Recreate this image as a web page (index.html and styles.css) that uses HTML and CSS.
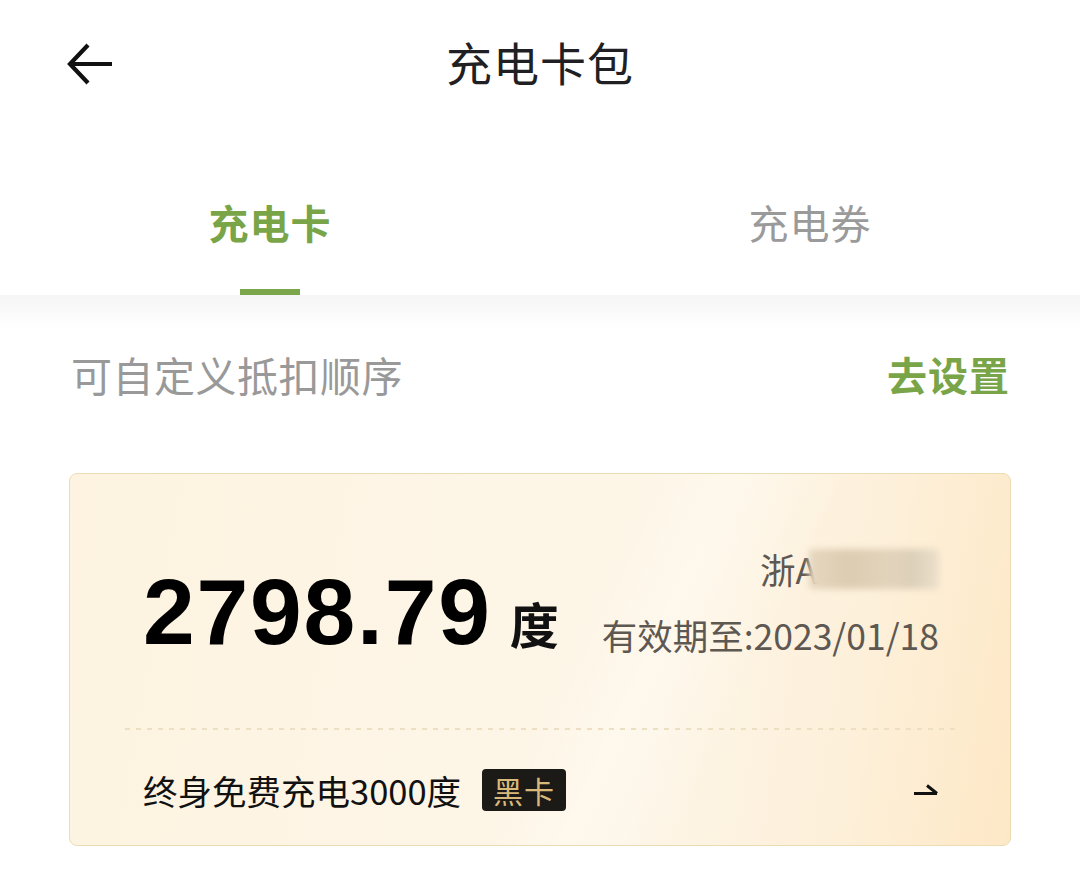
FILE: index.html
```html
<!DOCTYPE html>
<html lang="zh-CN">
<head>
    <meta charset="UTF-8">
    <meta name="viewport" content="width=device-width, initial-scale=1.0">
    <title>充电卡包</title>
    <link rel="stylesheet" href="styles.css">
</head>
<body>

    <!-- top bar -->
    <header class="topbar">
        <a href="#" class="back">
            <svg width="50" height="44" viewBox="0 0 50 44">
                <path d="M46 22H4M22 3L4 22l18 19" fill="none" stroke="#111" stroke-width="4.2" stroke-linecap="butt" stroke-linejoin="miter"/>
            </svg>
        </a>
        <h1 class="title">充电卡包</h1>
        <div></div>
    </header>

    <!-- tabs -->
    <nav class="tabs">
        <div class="tab active">
            <span class="tab-text">充电卡</span>
            <i class="tab-bar"></i>
        </div>
        <div class="tab">
            <span class="tab-text">充电券</span>
        </div>
    </nav>

    <main class="content">
        <div class="order-row">
            <span class="order-text">可自定义抵扣顺序</span>
            <a href="#" class="order-link">去设置</a>
        </div>

        <div class="card">
            <div class="card-top">
                <div class="amount">
                    <span class="amount-num">2798.79</span>
                    <span class="amount-unit">度</span>
                </div>
                <div class="card-info">
                    <div class="plate">浙A<span class="plate-blur"></span></div>
                    <div class="expire">有效期至:2023/01/18</div>
                </div>
            </div>
            <div class="dash"></div>
            <div class="card-bottom">
                <div class="card-name">
                    <span>终身免费充电3000度</span>
                    <span class="badge">黑卡</span>
                </div>
                <svg class="more" width="26" height="14" viewBox="0 0 26 14">
                    <path d="M1 11.5h23M14 3.5l10 8" fill="none" stroke="#111" stroke-width="3"/>
                </svg>
            </div>
        </div>
    </main>

</body>
</html>
```

FILE: styles.css
```css
*{
    padding: 0;
    margin: 0;
    box-sizing: border-box;
}
body{
    width: 1080px;
    background: #fff;
    font-family: "Noto Sans CJK SC", "Noto Sans", sans-serif;
    color: #1a1a1a;
}
a{
    text-decoration: none;
}

/* top bar */
.topbar{
    height: 128px;
    display: grid;
    grid-template-columns: 1fr auto 1fr;
    align-items: center;
    padding-left: 66px;
}
.back{
    display: flex;
    align-items: center;
}
.title{
    font-size: 46px;
    font-weight: 400;
    color: #1f1f24;
    line-height: 60px;
    letter-spacing: 1px;
    margin: -6px 0 0 -66px;
}

/* tabs */
.tabs{
    display: flex;
    height: 167px;
}
.tab{
    flex: 1;
    display: flex;
    flex-direction: column;
    align-items: center;
    padding-top: 66px;
}
.tab-text{
    font-size: 40px;
    line-height: 56px;
    color: #9a9a9a;
    letter-spacing: 1px;
}
.tab.active .tab-text{
    color: #79a548;
    font-weight: 700;
}
.tab-bar{
    display: block;
    width: 60px;
    height: 6px;
    margin-top: 39px;
    background: #7ba64c;
}

/* content */
.content{
    background: linear-gradient(#f5f5f5, #fff 34px);
    padding: 51px 69px 40px;
}
.order-row{
    display: flex;
    justify-content: space-between;
    align-items: center;
    height: 56px;
    padding: 0 1px 0 2px;
}
.order-text{
    font-size: 41px;
    color: #999;
    letter-spacing: 0.5px;
}
.order-link{
    font-size: 40px;
    font-weight: 700;
    color: #79a548;
    letter-spacing: 1px;
}

/* card */
.card{
    margin-top: 71px;
    border: 1.5px solid #ecdcb4;
    border-radius: 8px;
    padding: 0 71px 0 73px;
    background:
        linear-gradient(115deg, rgba(255,255,255,0) 0 52%, rgba(255,251,242,.55) 60%, rgba(255,255,255,0) 70%),
        linear-gradient(100deg, #fdf3e0 0%, #fdf5e6 40%, #fdf5e7 62%, #fdf0da 82%, #fde8c6 100%);
}
.card-top{
    display: flex;
    justify-content: space-between;
    align-items: flex-end;
    padding-top: 62px;
}
.amount{
    display: flex;
    align-items: baseline;
    margin-bottom: 10px;
}
.amount-num{
    font-family: "Liberation Sans", Arial, sans-serif;
    font-size: 93px;
    font-weight: 700;
    line-height: 92px;
    color: #000;
    letter-spacing: 1.8px;
}
.amount-unit{
    font-size: 49px;
    font-weight: 700;
    color: #111;
    margin-left: 18px;
}
.card-info{
    display: flex;
    flex-direction: column;
    align-items: flex-end;
}
.plate,
.expire{
    font-size: 35.5px;
    line-height: 66px;
    color: #5e5852;
}
.plate{
    display: flex;
    align-items: center;
}
.plate-blur{
    display: inline-block;
    width: 130px;
    height: 40px;
    margin-left: -8px;
    background: linear-gradient(90deg, #e6d7bf, #dcccb2 30%, #e2d3bb 60%, #ddd0ba 80%, #ece0cb);
    filter: blur(3px);
    border-radius: 4px;
}
.dash{
    height: 2px;
    margin: 60px -16px 0 -18px;
    background-image: linear-gradient(90deg, #ecdfc2 0 5px, transparent 5px);
    background-size: 11px 2px;
}
.card-bottom{
    display: flex;
    justify-content: space-between;
    align-items: center;
    padding: 35px 0 30px;
}
.card-name{
    display: flex;
    align-items: center;
    gap: 21px;
    font-size: 34.5px;
    color: #111;
}
.badge{
    display: inline-flex;
    align-items: center;
    justify-content: center;
    width: 84px;
    height: 42px;
    border-radius: 4px;
    background: #1c1a17;
    color: #d9b97a;
    font-size: 30px;
    letter-spacing: 1px;
}
.more{
    margin-top: -2px;
}
```
